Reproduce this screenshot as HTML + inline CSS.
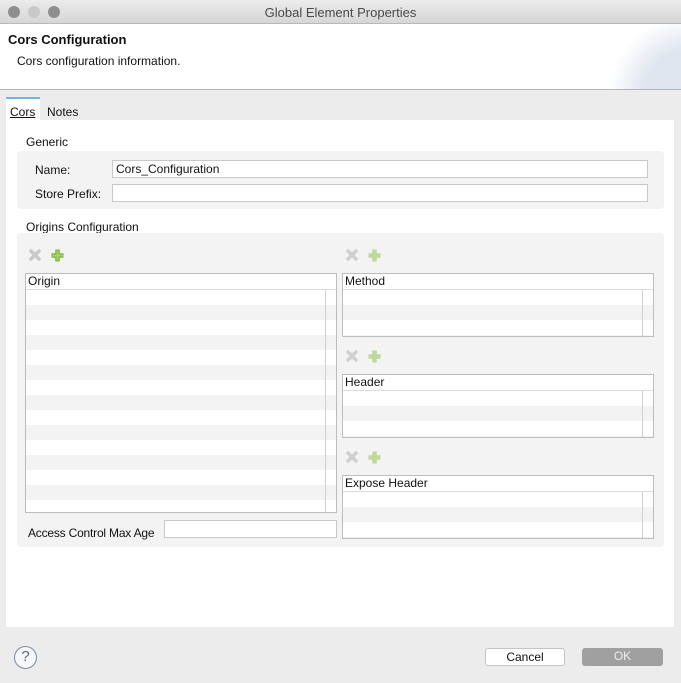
<!DOCTYPE html><html><head><style>
*{box-sizing:border-box;margin:0;padding:0}
body{width:681px;height:683px;position:relative;background:#ececec;font-family:"Liberation Sans",sans-serif;font-size:12px;color:#111;overflow:hidden}
.a{position:absolute}
.tbl{position:absolute;border:1px solid #bdbdbd;background:repeating-linear-gradient(#fff 0 15px,#f3f3f3 15px 30px);background-position:0 16px;}
.tbl .h{height:16px;background:#fff;border-bottom:1px solid #dcdcdc;padding-left:2px;line-height:15px;font-size:12px}
.tbl .v{position:absolute;top:16px;bottom:0;width:1px;background:#d0d0d0}
.inp{position:absolute;background:#fff;border:1px solid #c8c8c8;height:18px;padding-left:3px;line-height:16px}
.grp{position:absolute;background:#f3f3f3;border-radius:4px}
</style></head><body>
<div class="a" style="left:0;top:0;width:681px;height:24px;background:linear-gradient(#ebebeb,#d6d6d6);border-bottom:1px solid #b8b8b8"></div>
<div class="a" style="left:8px;top:6px;width:12px;height:12px;border-radius:6px;background:#8e8e8e"></div>
<div class="a" style="left:28px;top:6px;width:12px;height:12px;border-radius:6px;background:#c8c8c8"></div>
<div class="a" style="left:48px;top:6px;width:12px;height:12px;border-radius:6px;background:#8e8e8e"></div>
<div class="a" style="left:0;top:5px;width:681px;text-align:center;font-size:13px;color:#4a4a4a">Global Element Properties</div>
<div class="a" style="left:0;top:24px;width:681px;height:66px;background:#fff;border-bottom:1px solid #b5b5b5"></div>
<div class="a" style="left:600px;top:24px;width:81px;height:65px;background:radial-gradient(circle at 110% 110%,#dfe6ef 0 40%,transparent 70%)"></div>
<div class="a" style="left:8px;top:32px;font-weight:bold;font-size:13px">Cors Configuration</div>
<div class="a" style="left:17px;top:54px">Cors configuration information.</div>
<div class="a" style="left:6px;top:97px;width:34px;height:24px;background:#fff;border-top:2px solid #6bb5e0"></div>
<div class="a" style="left:10px;top:105px;text-decoration:underline">Cors</div>
<div class="a" style="left:47px;top:105px">Notes</div>
<div class="a" style="left:6px;top:120px;width:668px;height:507px;background:#fff"></div>
<div class="a" style="left:26px;top:135px">Generic</div>
<div class="grp" style="left:17px;top:151px;width:647px;height:58px"></div>
<div class="a" style="left:35px;top:163px">Name:</div>
<div class="inp" style="left:112px;top:160px;width:536px">Cors_Configuration</div>
<div class="a" style="left:35px;top:187px">Store Prefix:</div>
<div class="inp" style="left:112px;top:184px;width:536px"></div>
<div class="a" style="left:26px;top:220px">Origins Configuration</div>
<div class="grp" style="left:17px;top:233px;width:647px;height:314px"></div>
<svg class="a" style="left:28px;top:248px" width="40" height="16"><path d="M3 3L11 11M11 3L3 11" stroke="#c8c8c8" stroke-width="3.5" stroke-linecap="round"/><path d="M29.5 1.5v12M23.5 7.5h12" stroke="#7cb342" stroke-width="4.5"/><path d="M29.5 2.5v10M24.5 7.5h10" stroke="#a5d46a" stroke-width="2"/></svg>
<svg class="a" style="left:345px;top:248px" width="40" height="16"><path d="M3 3L11 11M11 3L3 11" stroke="#d0d0d0" stroke-width="3.5" stroke-linecap="round"/><path d="M29.5 1.5v12M23.5 7.5h12" stroke="#bcd89a" stroke-width="4.5"/></svg>
<svg class="a" style="left:345px;top:349px" width="40" height="16"><path d="M3 3L11 11M11 3L3 11" stroke="#d0d0d0" stroke-width="3.5" stroke-linecap="round"/><path d="M29.5 1.5v12M23.5 7.5h12" stroke="#bcd89a" stroke-width="4.5"/></svg>
<svg class="a" style="left:345px;top:450px" width="40" height="16"><path d="M3 3L11 11M11 3L3 11" stroke="#d0d0d0" stroke-width="3.5" stroke-linecap="round"/><path d="M29.5 1.5v12M23.5 7.5h12" stroke="#bcd89a" stroke-width="4.5"/></svg>
<div class="tbl" style="left:25px;top:273px;width:312px;height:240px"><div class="h">Origin</div><div class="v" style="left:299px"></div></div>
<div class="tbl" style="left:342px;top:273px;width:312px;height:64px"><div class="h">Method</div><div class="v" style="left:299px"></div></div>
<div class="tbl" style="left:342px;top:374px;width:312px;height:64px"><div class="h">Header</div><div class="v" style="left:299px"></div></div>
<div class="tbl" style="left:342px;top:475px;width:312px;height:64px"><div class="h">Expose Header</div><div class="v" style="left:299px"></div></div>
<div class="a" style="left:28px;top:526px;letter-spacing:-0.2px">Access Control Max Age</div>
<div class="inp" style="left:164px;top:520px;width:173px"></div>
<div class="a" style="left:14px;top:646px;width:23px;height:23px;border:1.5px solid #7a8aa0;border-radius:50%;background:#f5f7fa;text-align:center;line-height:20px;font-size:15px;color:#5a6a80">?</div>
<div class="a" style="left:485px;top:648px;width:80px;height:18px;background:#fff;border:1px solid #c4c4c4;border-radius:3px;text-align:center;line-height:16px">Cancel</div>
<div class="a" style="left:582px;top:648px;width:81px;height:18px;background:#a0a0a0;border-radius:3px;text-align:center;line-height:17px;color:#eee">OK</div>
</body></html>
